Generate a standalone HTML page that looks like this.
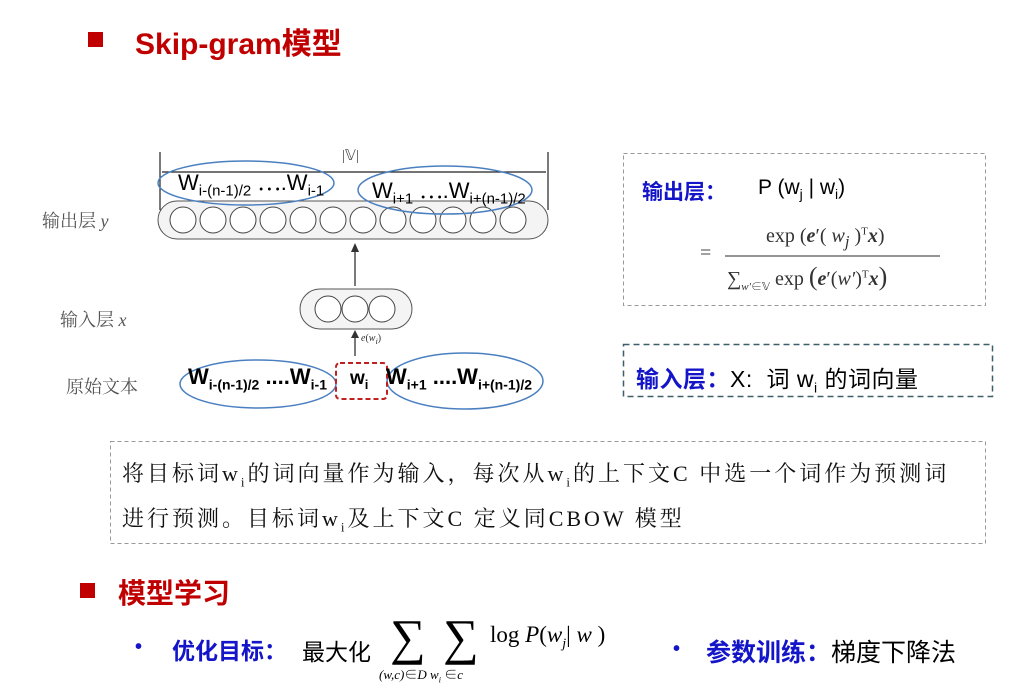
<!DOCTYPE html>
<html><head><meta charset="utf-8"><style>
body{margin:0;width:1024px;height:681px;background:#fff;position:relative;overflow:hidden;font-family:"Liberation Sans","Noto Sans CJK SC",sans-serif}
.a{position:absolute;white-space:nowrap}
.red{color:#c00000;font-weight:bold}
.blue{color:#1414c8;font-weight:bold}
.ser{font-family:"Liberation Serif","Noto Serif CJK SC",serif}
.sq{position:absolute;background:#c00000}
</style></head><body>
<div class="sq" style="left:88px;top:32px;width:15px;height:15px"></div>
<div class="a red" style="left:135px;top:19px;font-size:30px">Skip-gram模型</div>

<svg class="a" style="left:0;top:0" width="1024" height="681">
<g stroke="#222" stroke-width="1.2" fill="none">
<line x1="160" y1="152" x2="160" y2="210"/><line x1="548" y1="152" x2="548" y2="210"/>
<line x1="162" y1="172" x2="546" y2="172"/>
</g>
<rect x="158" y="201" width="390" height="38" rx="19" fill="#f4f4f4" stroke="#555"/>
<g fill="#fff" stroke="#444">
<circle cx="183" cy="220" r="13"/><circle cx="213" cy="220" r="13"/><circle cx="243" cy="220" r="13"/><circle cx="273" cy="220" r="13"/><circle cx="303" cy="220" r="13"/><circle cx="333" cy="220" r="13"/><circle cx="363" cy="220" r="13"/><circle cx="393" cy="220" r="13"/><circle cx="423" cy="220" r="13"/><circle cx="453" cy="220" r="13"/><circle cx="483" cy="220" r="13"/><circle cx="513" cy="220" r="13"/>
</g>
<rect x="300" y="289" width="112" height="40" rx="20" fill="#f4f4f4" stroke="#555"/>
<g fill="#fff" stroke="#444"><circle cx="328" cy="309" r="13"/><circle cx="355" cy="309" r="13"/><circle cx="382" cy="309" r="13"/></g>
<g stroke="#333" stroke-width="1.3"><line x1="355" y1="286" x2="355" y2="250"/><line x1="355" y1="356" x2="355" y2="336"/></g>
<polygon points="355,243 351,252 359,252" fill="#333"/><polygon points="355,330 351,338 359,338" fill="#333"/>
<g fill="none" stroke="#4a7fc0" stroke-width="1.5">
<ellipse cx="246" cy="183" rx="88" ry="22"/><ellipse cx="445" cy="190" rx="87" ry="24"/>
<ellipse cx="258" cy="384" rx="78" ry="24"/><ellipse cx="465" cy="381" rx="78" ry="28"/>
</g>
<rect x="336" y="363" width="51" height="36" rx="4" fill="none" stroke="#c02020" stroke-width="2" stroke-dasharray="5,3"/>
<rect x="623.5" y="153.5" width="362" height="152" fill="none" stroke="#999" stroke-dasharray="4,3"/>
<rect x="623.5" y="344.5" width="369" height="52" fill="none" stroke="#3d5f6a" stroke-width="1.5" stroke-dasharray="6,4"/>
<rect x="110.5" y="441.5" width="875" height="102" fill="none" stroke="#999" stroke-dasharray="4,3"/>
<line x1="725" y1="256" x2="940" y2="256" stroke="#555" stroke-width="1.3"/>
</svg>

<div class="a ser" style="left:342px;top:146px;font-size:15px;color:#444">|𝕍|</div>
<div class="a" style="left:178px;top:165px;font-size:22px">W<sub style="font-size:15px">i-(n-1)/2</sub> ⋯.W<sub style="font-size:15px">i-1</sub></div>
<div class="a" style="left:372px;top:173px;font-size:22px">W<sub style="font-size:15px">i+1</sub> ⋯.W<sub style="font-size:15px">i+(n-1)/2</sub></div>
<div class="a ser" style="left:42px;top:207px;font-size:18px;color:#555">输出层 <i>y</i></div>
<div class="a ser" style="left:60px;top:306px;font-size:18px;color:#555">输入层 <i>x</i></div>
<div class="a ser" style="left:66px;top:373px;font-size:18px;color:#555">原始文本</div>
<div class="a ser" style="left:361px;top:333px;font-size:10px;color:#333"><i>e</i>(<i>w<sub>i</sub></i>)</div>
<div class="a" style="left:188px;top:364px;font-size:22px;font-weight:bold">W<sub style="font-size:14px">i-(n-1)/2</sub> ....W<sub style="font-size:14px">i-1</sub></div>
<div class="a" style="left:350px;top:368px;font-size:19px;font-weight:bold">w<sub style="font-size:13px">i</sub></div>
<div class="a" style="left:386px;top:364px;font-size:22px;font-weight:bold">W<sub style="font-size:14px">i+1</sub> ....W<sub style="font-size:14px">i+(n-1)/2</sub></div>

<div class="a blue" style="left:642px;top:176px;font-size:21px">输出层：</div>
<div class="a" style="left:758px;top:176px;font-size:21px">P (w<sub style="font-size:14px">j</sub> | w<sub style="font-size:14px">i</sub>)</div>
<div class="a ser" style="left:700px;top:242px;font-size:20px;color:#444">=</div>
<div class="a ser" style="left:766px;top:225px;font-size:20px;color:#333">exp (<b><i>e</i></b>′( <i>w<sub>j</sub></i> )<sup style="font-size:11px">T</sup><b><i>x</i></b>)</div>
<div class="a ser" style="left:727px;top:262px;font-size:20px;color:#333">∑<sub style="font-size:11px"><i>w′</i>∈𝕍</sub> exp <span style="font-size:26px">(</span><b><i>e</i></b>′(<i>w′</i>)<sup style="font-size:11px">T</sup><b><i>x</i></b><span style="font-size:26px">)</span></div>

<div class="a blue" style="left:636px;top:360px;font-size:23px;letter-spacing:0.5px">输入层：<span style="color:#000;font-weight:normal">X:&nbsp; 词 w<sub style="font-size:14px">i</sub> 的词向量</span></div>

<div class="a ser" style="left:122px;top:457px;font-size:22px;letter-spacing:3px;color:#111">将目标词w<sub style="font-size:13px">i</sub>的词向量作为输入，每次从w<sub style="font-size:13px">i</sub>的上下文C 中选一个词作为预测词</div>
<div class="a ser" style="left:122px;top:502px;font-size:22px;letter-spacing:3px;color:#111">进行预测。目标词w<sub style="font-size:13px">i</sub>及上下文C 定义同CBOW 模型</div>

<div class="sq" style="left:80px;top:583px;width:15px;height:15px"></div>
<div class="a red" style="left:118px;top:572px;font-size:28px">模型学习</div>
<div class="a blue" style="left:135px;top:636px;font-size:20px">•</div>
<div class="a blue" style="left:172px;top:632px;font-size:23px">优化目标：</div>
<div class="a" style="left:302px;top:633px;font-size:23px">最大化</div>
<div class="a ser" style="left:390px;top:608px;font-size:50px">∑</div>
<div class="a ser" style="left:443px;top:608px;font-size:50px">∑</div>
<div class="a ser" style="left:490px;top:622px;font-size:23px">log <i>P</i>(<i>w<sub style="font-size:14px">j</sub></i>| <i>w</i> )</div>
<div class="a ser" style="left:379px;top:664px;font-size:13px"><i>(w,c)</i>∈<i>D</i> <i>w<sub style="font-size:8px">i</sub></i> ∈<i>c</i></div>
<div class="a blue" style="left:673px;top:638px;font-size:20px">•</div>
<div class="a blue" style="left:706px;top:633px;font-size:25px">参数训练：<span style="color:#000;font-weight:normal">梯度下降法</span></div>
</body></html>
